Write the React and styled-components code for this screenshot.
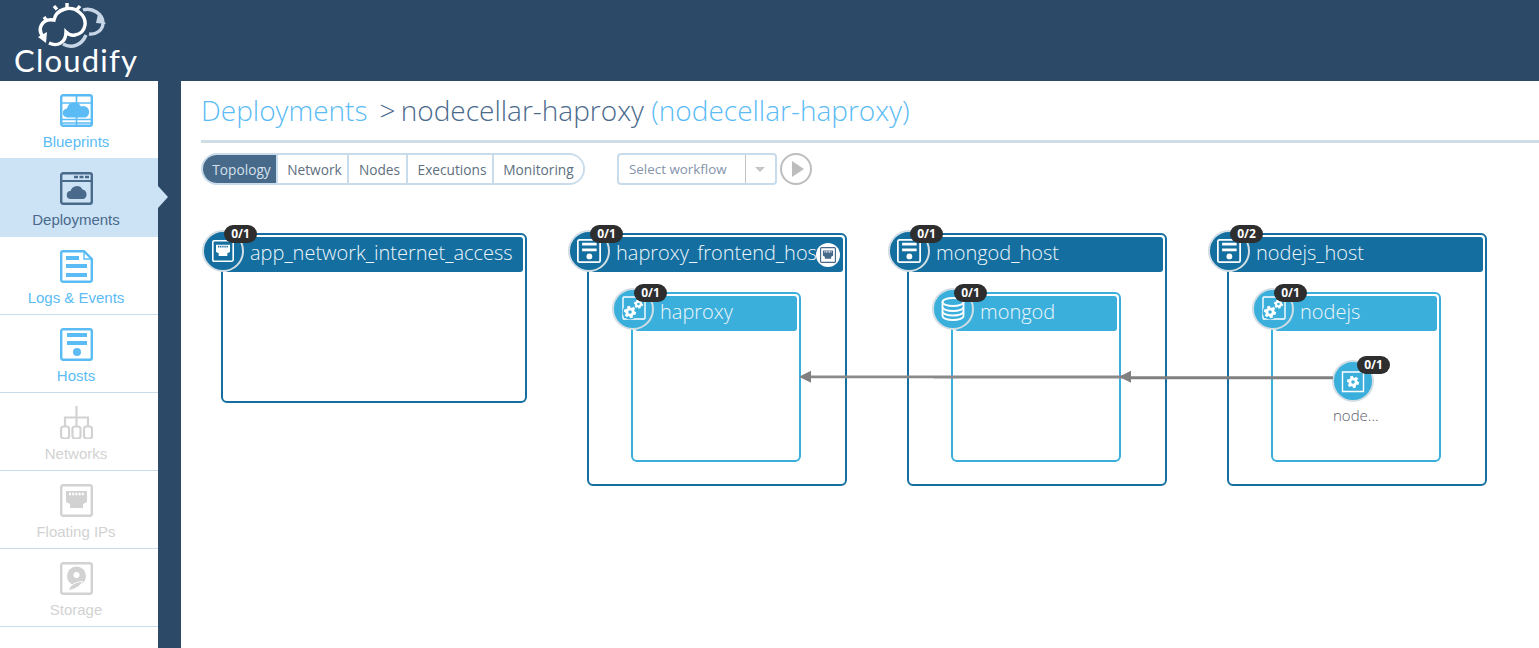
import React from 'react';
import styled, { createGlobalStyle } from 'styled-components';

const Global = createGlobalStyle`
  html, body { margin: 0; padding: 0; background: #fff; overflow: hidden; }
  * { box-sizing: border-box; }
`;

const Page = styled.div`
  width: 1539px; height: 648px; display: flex; flex-direction: column; overflow: hidden;
  font-family: "Open Sans", sans-serif;
`;
const TopBar = styled.header`
  height: 81px; flex: none; background: #2c4a68; position: relative;
`;
const LogoWrap = styled.div`
  width: 158px; height: 81px; position: relative;
  svg { position: absolute; left: 36px; top: 0; }
`;
const LogoText = styled.span`
  position: absolute; left: 14px; top: 38px; color: #fff; font-family: Lato, sans-serif;
  font-size: 31px; line-height: 44px; font-weight: 400; letter-spacing: 1.2px;
`;
const Body = styled.div`
  flex: 1; display: flex; min-height: 0;
`;
const Sidebar = styled.nav`
  width: 181px; flex: none; background: #fff; border-right: 23px solid #2c4a68; display: flex; flex-direction: column;
`;
const NavItem = styled.div`
  height: ${p => p.$h || 78}px; flex: none; position: relative; display: flex; flex-direction: column; align-items: center;
  padding: ${p => p.$pt || 12}px 6px 0 0;
  background: ${p => p.$active ? '#cce2f5' : '#fff'};
  border-bottom: 1px solid ${p => p.$plain ? 'transparent' : '#c8dcec'};
  color: ${p => p.$active ? '#4a6a8c' : p.$off ? '#d2d2d2' : '#5bbcf5'};
  ${p => p.$active && `
    &::after {
      content: ''; position: absolute; left: 100%; top: 28px; width: 0; height: 0;
      border-style: solid; border-width: 11px 0 11px 10px; border-color: transparent transparent transparent #cce2f5;
    }`}
`;
const NavLabel = styled.span`
  font-family: "Liberation Sans", Arial, sans-serif; font-size: 15px; line-height: 16px; margin-top: 7px; white-space: nowrap;
`;
const Main = styled.main`
  flex: 1; min-width: 0; display: flex; flex-direction: column; position: relative;
`;
const TitleBar = styled.div`
  height: 62px; margin-left: 20px; border-bottom: 3px solid #d0dde5; padding-top: 11px;
  font-size: 28px; font-weight: 300; line-height: 36px; white-space: nowrap;
`;
const Crumb = styled.span`
  color: ${p => p.$dark ? '#4a6a8c' : '#5bbcf5'};
  margin-left: ${p => p.$ml || 0}px;
  word-spacing: ${p => p.$ws || 0}px;
`;
const ToolRow = styled.div`
  display: flex; align-items: center; margin: 10px 0 0 20px; height: 32px;
`;
const Tabs = styled.div`
  display: flex; height: 32px; width: 384px; border: 2px solid #c8dcec; border-radius: 16px; overflow: hidden;
`;
const Tab = styled.div`
  width: ${p => p.$w}px; flex: none; display: flex; align-items: center; justify-content: center;
  padding-left: ${p => p.$last ? 0 : 4}px;
  font-size: 13.7px; color: ${p => p.$active ? '#d5e1ec' : '#5d6f80'};
  background: ${p => p.$active ? '#47698a' : '#fff'};
  border-right: ${p => p.$last ? 0 : 2}px solid #c8dcec;
`;
const Select = styled.div`
  margin-left: 32px; width: 160px; height: 32px; border: 2px solid #c8dcec; border-radius: 4px; display: flex; align-items: center;
`;
const SelectText = styled.span`
  width: 127px; height: 100%; padding-left: 10px; display: flex; align-items: center; font-size: 13.4px; color: #8494aa;
  border-right: 1px solid #c4c4c4;
`;
const Caret = styled.span`
  margin-left: 9px; width: 0; height: 0; border-style: solid; border-width: 5px 5px 0 5px; border-color: #c4c4c4 transparent transparent transparent;
`;
const PlayBtn = styled.div`
  margin-left: 3px; width: 32px; height: 32px; border: 2px solid #bdbdbd; border-radius: 50%; display: flex; align-items: center; justify-content: center;
  &::before {
    content: ''; margin-left: 3px; width: 0; height: 0; border-style: solid; border-width: 8px 0 8px 12px; border-color: transparent transparent transparent #bdbdbd;
  }
`;
const Canvas = styled.div`
  position: relative; flex: 1;
`;
const Box = styled.div`
  position: absolute; left: ${p => p.$x}px; top: ${p => p.$y}px; width: ${p => p.$w}px; height: ${p => p.$h}px;
  border: 2px solid ${p => p.$color}; border-radius: 6px; background: #fff;
`;
const HeadBar = styled.div`
  position: absolute; left: 2px; right: 2px; top: 2px; height: 35px; background: ${p => p.$color}; border-radius: 3px;
  color: #eef6fb; font-size: 20px; font-weight: 300; line-height: 31px; padding-left: ${p => p.$pl}px; white-space: nowrap; overflow: hidden;
`;
const NodeCircle = styled.div`
  position: absolute; left: ${p => p.$x}px; top: ${p => p.$y}px; width: 42px; height: 42px; border-radius: 50%;
  background: ${p => p.$color}; border: 2px solid #d2dee4; display: flex; align-items: center; justify-content: center;
`;
const Badge = styled.div`
  position: absolute; left: ${p => p.$x}px; top: ${p => p.$y}px; width: 33px; height: 18px; border-radius: 9px; background: #2e2e2e; color: #fff;
  font-size: 12px; font-weight: 700; line-height: 18px; text-align: center;
`;
const SmallCircle = styled.div`
  position: absolute; right: 3px; top: 6px; width: 24px; height: 24px; border-radius: 50%; background: #fff; display: flex; align-items: center; justify-content: center;
`;
const NodeLabel = styled.div`
  position: absolute; left: ${p => p.$x}px; top: ${p => p.$y}px; font-size: 15px; font-weight: 300; color: #5d5d6d; line-height: 18px;
`;
const Wires = styled.svg`
  position: absolute; left: 0; top: 0; pointer-events: none;
`;

const BlueprintsIcon = () => (
  <svg width="33" height="33" viewBox="0 0 33 33" fill="none">
    <rect x="1.200" y="1.200" width="30.600" height="30.600" rx="2" stroke="#5bbcf5" strokeWidth="2.400" />
    <path d="M1 9H32M1 25.500H32M1 29H32M16.500 1V32" stroke="#5bbcf5" strokeWidth="1.600" />
    <path d="M7.500 23.500a4.500 4.500 0 0 1 -0.500 -9a7.500 7.500 0 0 1 14 -2a5.500 5.500 0 0 1 4.500 11z" fill="#5bbcf5" />
  </svg>
);
const DeploymentsIcon = () => (
  <svg width="33" height="33" viewBox="0 0 33 33" fill="none">
    <rect x="1.200" y="1.200" width="30.600" height="30.600" rx="2" stroke="#4a6a8c" strokeWidth="2.400" />
    <path d="M1 9H32" stroke="#4a6a8c" strokeWidth="2" />
    <path d="M14 5H18M19.500 5H23.500M25 5H29" stroke="#4a6a8c" strokeWidth="2.600" />
    <path d="M11 27a4 4 0 0 1 -0.500 -8a6.500 6.500 0 0 1 12 -1.500a5 5 0 0 1 1 9.500z" fill="#4a6a8c" />
  </svg>
);
const LogsIcon = () => (
  <svg width="33" height="33" viewBox="0 0 33 33" fill="none">
    <path d="M3 1.200H24L31.800 9V30a1.800 1.800 0 0 1-1.800 1.800H3a1.800 1.800 0 0 1-1.800-1.800V3a1.800 1.800 0 0 1 1.800-1.800z" stroke="#5bbcf5" strokeWidth="2.400" />
    <path d="M24 1V9H32" stroke="#5bbcf5" strokeWidth="1.400" />
    <path d="M6 6H19V10H6zM6 14H27V18H6zM6 23H27V27H6z" fill="#5bbcf5" />
  </svg>
);
const HostIcon = ({ color = '#5bbcf5', size = 33 }) => (
  <svg width={size} height={size} viewBox="0 0 33 33" fill="none">
    <rect x="1.200" y="1.200" width="30.600" height="30.600" rx="2" stroke={color} strokeWidth="2.400" />
    <path d="M7 5H27V9H7zM7 13H27V17H7z" fill={color} />
    <circle cx="17" cy="24" r="4" fill={color} />
  </svg>
);
const NetworksIcon = () => (
  <svg width="33" height="33" viewBox="0 0 33 33" fill="none" stroke="#d2d2d2" strokeWidth="2.200">
    <path d="M16.500 0V20M5 20V11.500H28V20" />
    <rect x="1.100" y="20.500" width="8" height="12" rx="2.500" />
    <rect x="12.500" y="20.500" width="8" height="12" rx="2.500" />
    <rect x="24" y="20.500" width="8" height="12" rx="2.500" />
  </svg>
);
const PortIcon = ({ color = '#d2d2d2', size = 33, inner = '#fff' }) => (
  <svg width={size} height={size} viewBox="0 0 33 33" fill="none">
    <rect x="1.200" y="1.200" width="30.600" height="30.600" rx="2" stroke={color} strokeWidth="2.400" />
    <path d="M6 7H27V18L23 20V24H10V20L6 18z" fill={color} />
    <path d="M9 10H24" stroke={inner} strokeWidth="2.400" strokeDasharray="2 1.200" />
  </svg>
);
const StorageIcon = () => (
  <svg width="33" height="33" viewBox="0 0 33 33" fill="none">
    <rect x="1.200" y="1.200" width="30.600" height="30.600" rx="2" stroke="#d2d2d2" strokeWidth="2.400" />
    <circle cx="16.500" cy="14" r="9.500" fill="#d2d2d2" />
    <circle cx="16.500" cy="13" r="3" fill="#fff" />
    <path d="M8.500 28.500C10 23 15 20 22.500 19.500C21 24 14 28 8.500 28.500z" fill="#d2d2d2" stroke="#fff" strokeWidth="1" />
  </svg>
);
const Gear = ({ cx, cy, r, hole }) => (
  <g>
    {[0, 60, 120].map(a => (
      <line
        key={a}
        x1={cx - r}
        y1={cy}
        x2={cx + r}
        y2={cy}
        stroke="#fff"
        strokeWidth={r * 0.5}
        transform={`rotate(${a + 15} ${cx} ${cy})`}
      />
    ))}
    <circle cx={cx} cy={cy} r={r * 0.76} fill="#fff" />
    <circle cx={cx} cy={cy} r={r * 0.3} fill={hole} />
  </g>
);
const GearsIcon = () => (
  <svg width="26" height="26" viewBox="0 0 26 26" fill="none">
    <rect x="3" y="1" width="22" height="22" rx="1" stroke="#fff" strokeWidth="1.400" />
    <circle cx="10" cy="16" r="7.500" fill="#3bafdc" />
    <Gear cx={10} cy={16} r={6} hole="#3bafdc" />
    <Gear cx={18.500} cy={8} r={4.500} hole="#3bafdc" />
  </svg>
);
const DbIcon = () => (
  <svg width="26" height="26" viewBox="0 0 26 26" fill="none" stroke="#fff" strokeWidth="1.800">
    <ellipse cx="13" cy="6" rx="10.500" ry="4" />
    <path d="M2.500 6V20c0 2.200 4.700 4 10.500 4s10.500-1.800 10.500-4V6" />
    <path d="M2.500 11c0 2.200 4.700 4 10.500 4s10.500-1.800 10.500-4M2.500 15.500c0 2.200 4.700 4 10.500 4s10.500-1.800 10.500-4" />
  </svg>
);
const ScriptIcon = () => (
  <svg width="26" height="26" viewBox="0 0 26 26" fill="none">
    <path d="M20 3H2.500V22.500H23.500V3" stroke="#fff" strokeWidth="1.400" transform="translate(0 1)" />
    <path d="M21 5V0H25" stroke="#fff" strokeWidth="1" />
    <Gear cx={13} cy={14} r={6} hole="#3bafdc" />
  </svg>
);
const Logo = () => (
  <svg width="80" height="50" viewBox="36 0 80 50" fill="none">
    <path d="M83 10C92 7 103 14 103 23C103 30 96 35 89 34" stroke="#c6d6e6" strokeWidth="3.400" />
    <path d="M86 35C82 45 72 49 63 44" stroke="#c6d6e6" strokeWidth="3.400" />
    <path d="M98 14L106 24L96 23z" fill="#c6d6e6" />
    <path d="M44 38C36 29 42 18 54 20C56 9 71 5 79 12C89 20 86 33 75 35C71 36 68 34 66 32C66 43 57 47 49 43" stroke="#fff" strokeWidth="3.400" />
    <path d="M67 8V3M57 9.500L54 6M77 9.500L80 6M47 21L44 17" stroke="#fff" strokeWidth="3.400" />
    <path d="M38 37L47 32L46 43z" fill="#fff" />
  </svg>
);

const navItems = [
  { label: 'Blueprints', icon: <BlueprintsIcon />, h: 77, pt: 13, plain: true },
  { label: 'Deployments', icon: <DeploymentsIcon />, h: 79, pt: 14, active: true, plain: true },
  { label: 'Logs & Events', icon: <LogsIcon />, pt: 13 },
  { label: 'Hosts', icon: <HostIcon />, pt: 13 },
  { label: 'Networks', icon: <NetworksIcon />, off: true, pt: 13 },
  { label: 'Floating IPs', icon: <PortIcon />, off: true, pt: 13 },
  { label: 'Storage', icon: <StorageIcon />, off: true, pt: 13 },
];

const tabs = [
  { label: 'Topology', w: 75, active: true },
  { label: 'Network', w: 71 },
  { label: 'Nodes', w: 59 },
  { label: 'Executions', w: 86 },
  { label: 'Monitoring', w: 89, last: true },
];

const DARK = '#146fa0';
const LIGHT = '#3bafdc';
const ORIGIN_X = 181;
const ORIGIN_Y = 185;

const hosts = [
  { name: 'app_network_internet_access', x: 221, y: 233, w: 306, h: 170, count: '0/1', icon: <PortIcon color="#fff" inner={DARK} size={22} /> },
  { name: 'haproxy_frontend_host', x: 587, y: 233, w: 260, h: 253, count: '0/1', icon: <HostIcon color="#fff" size={24} />, extra: true,
    child: { name: 'haproxy', count: '0/1', icon: <GearsIcon /> } },
  { name: 'mongod_host', x: 907, y: 233, w: 260, h: 253, count: '0/1', icon: <HostIcon color="#fff" size={24} />,
    child: { name: 'mongod', count: '0/1', icon: <DbIcon /> } },
  { name: 'nodejs_host', x: 1227, y: 233, w: 260, h: 253, count: '0/2', icon: <HostIcon color="#fff" size={24} />,
    child: { name: 'nodejs', count: '0/1', icon: <GearsIcon /> } },
];

const HostNode = ({ host }) => {
  const x = host.x - ORIGIN_X;
  const y = host.y - ORIGIN_Y;
  return (
    <>
      <Box $x={x} $y={y} $w={host.w} $h={host.h} $color={DARK}>
        <HeadBar $color={DARK} $pl={25}>
          {host.name}
          {host.extra && (
            <SmallCircle><PortIcon color="#47698a" inner="#fff" size={16} /></SmallCircle>
          )}
        </HeadBar>
      </Box>
      <NodeCircle $x={x - 19} $y={y - 3} $color={DARK}>{host.icon}</NodeCircle>
      <Badge $x={x + 3} $y={y - 8}>{host.count}</Badge>
      {host.child && (
        <>
          <Box $x={x + 44} $y={y + 59} $w={170} $h={170} $color={LIGHT}>
            <HeadBar $color={LIGHT} $pl={25}>{host.child.name}</HeadBar>
          </Box>
          <NodeCircle $x={x + 25} $y={y + 55} $color={LIGHT}>{host.child.icon}</NodeCircle>
          <Badge $x={x + 47} $y={y + 51}>{host.child.count}</Badge>
        </>
      )}
    </>
  );
};

export default function App() {
  return (
    <Page>
      <Global />
      <TopBar>
        <LogoWrap>
          <Logo />
          <LogoText>Cloudify</LogoText>
        </LogoWrap>
      </TopBar>
      <Body>
        <Sidebar>
          {navItems.map(n => (
            <NavItem key={n.label} $h={n.h} $pt={n.pt} $active={n.active} $off={n.off} $plain={n.plain}>
              {n.icon}
              <NavLabel>{n.label}</NavLabel>
            </NavItem>
          ))}
        </Sidebar>
        <Main>
          <TitleBar>
            <Crumb>Deployments</Crumb>
            <Crumb $dark $ml={12} $ws={-2}>&gt; nodecellar-haproxy</Crumb>
            <Crumb> (nodecellar-haproxy)</Crumb>
          </TitleBar>
          <ToolRow>
            <Tabs>
              {tabs.map(t => (
                <Tab key={t.label} $w={t.w} $active={t.active} $last={t.last}>{t.label}</Tab>
              ))}
            </Tabs>
            <Select>
              <SelectText>Select workflow</SelectText>
              <Caret />
            </Select>
            <PlayBtn />
          </ToolRow>
          <Canvas>
            {hosts.map(h => <HostNode key={h.name} host={h} />)}
            <NodeCircle $x={1151} $y={175} $color={LIGHT}><ScriptIcon /></NodeCircle>
            <Badge $x={1176} $y={171}>0/1</Badge>
            <NodeLabel $x={1152} $y={221}>node...</NodeLabel>
            <Wires width="1358" height="300" viewBox="181 185 1358 300">
              <path d="M1333 377.700H1130" stroke="#808080" strokeWidth="3" fill="none" />
              <path d="M1130 377H934" stroke="#8a8a8a" strokeWidth="3" fill="none" />
              <path d="M934 376.800H810" stroke="#8a8a8a" strokeWidth="2.800" fill="none" />
              <path d="M1119 376.700L1131 370.700V382.700z" fill="#808080" />
              <path d="M799 376.700L811 370.700V382.700z" fill="#808080" />
            </Wires>
          </Canvas>
        </Main>
      </Body>
    </Page>
  );
}
